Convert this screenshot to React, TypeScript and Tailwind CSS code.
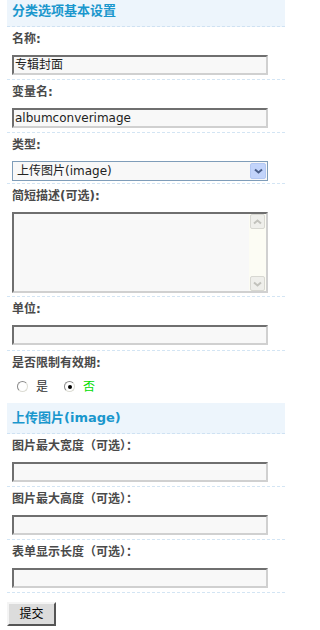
import type { ReactNode } from "react";

const font = "font-['DejaVu_Sans','Noto_Sans_CJK_SC',sans-serif]";

function SectionHeader({ title, className = "" }: { title: string; className?: string }) {
  return (
    <div
      className={`h-[31px] bg-[#edf5fc] border-b border-dashed border-[#cfe2f3] pl-[5px] flex items-center text-[13px] font-bold text-[#1a97cd] ${className}`}
    >
      {title}
    </div>
  );
}

function Field({ label, children, pb = "pb-[4px]", last = false }: { label: string; children: ReactNode; pb?: string; last?: boolean }) {
  return (
    <div className={`pl-[5px] pt-[4px] ${pb} ${last ? "" : "border-b border-dashed border-[#d3e5f4]"}`}>
      <div className="h-[16px] leading-[16px] font-bold text-[12px] text-[#4a4a4a] mb-[8px]">{label}</div>
      {children}
    </div>
  );
}

function TextInput({ value = "" }: { value?: string }) {
  return (
    <div className="w-[256px] h-[20px] bg-[#f8f8f8] border-2 border-t-[#6f6f6f] border-l-[#6f6f6f] border-r-[#d0d0d0] border-b-[#d0d0d0] pl-[1px] flex items-center text-[12px] text-[#222] leading-none">
      {value}
    </div>
  );
}

function Chevron({ up = false, color }: { up?: boolean; color: string }) {
  return (
    <svg width="9" height="6" viewBox="0 0 9 6" className={up ? "rotate-180" : ""}>
      <path d="M1 1.5 L4.5 4.5 L8 1.5" fill="none" stroke={color} strokeWidth="2" />
    </svg>
  );
}

function Radio({ checked = false }: { checked?: boolean }) {
  return (
    <div className="w-[11px] h-[11px] rounded-full bg-white border border-t-[#8a8a8a] border-l-[#8a8a8a] border-r-[#dcdcd4] border-b-[#dcdcd4] flex items-center justify-center">
      {checked && <div className="w-[4px] h-[4px] rounded-full bg-black" />}
    </div>
  );
}

export default function App() {
  return (
    <div className={`w-[285px] h-[630px] overflow-hidden bg-white pl-[7px] ${font}`}>
      <SectionHeader title="分类选项基本设置" className="-mt-[4px]" />

      <Field label="名称:">
        <TextInput value="专辑封面" />
      </Field>

      <Field label="变量名:">
        <TextInput value="albumconverimage" />
      </Field>

      <Field label="类型:" pb="pb-[2px]">
        <div className="w-[256px] h-[20px] bg-[#f8f8f8] border border-[#7f9db9] flex items-center justify-between pl-[4px] pr-[1px] text-[12px] text-[#222]">
          <span>上传图片(image)</span>
          <div className="w-[16px] h-[16px] rounded-[2px] bg-[#c2d4fb] border border-[#b3c8f3] flex items-center justify-center">
            <Chevron color="#4a5f8a" />
          </div>
        </div>
      </Field>

      <Field label="简短描述(可选):" pb="pb-[3px]">
        <div className="w-[256px] h-[81px] bg-[#f8f8f8] border-2 border-t-[#6f6f6f] border-l-[#6f6f6f] border-r-[#d0d0d0] border-b-[#d0d0d0] flex justify-end">
          <div className="w-[17px] h-full bg-[#fcfcf4] flex flex-col justify-between items-center">
            <div className="w-[15px] h-[15px] bg-[#efefeb] border border-[#d8d8d2] rounded-[2px] flex items-center justify-center">
              <Chevron up color="#c2c2bc" />
            </div>
            <div className="w-[15px] h-[15px] bg-[#efefeb] border border-[#d8d8d2] rounded-[2px] flex items-center justify-center">
              <Chevron color="#c2c2bc" />
            </div>
          </div>
        </div>
      </Field>

      <Field label="单位:" pb="pb-[5px]">
        <TextInput />
      </Field>

      <div className="pl-[5px] pt-[4px] pb-[8px]">
        <div className="h-[16px] leading-[16px] font-bold text-[12px] text-[#4a4a4a]">是否限制有效期:</div>
        <div className="mt-[7px] h-[17px] flex items-center text-[12px] pl-[5px]">
          <Radio />
          <span className="ml-[8px] text-[#333]">是</span>
          <div className="ml-[16px]">
            <Radio checked />
          </div>
          <span className="ml-[8px] text-[#00dd00]">否</span>
        </div>
      </div>

      <SectionHeader title="上传图片(image)" />

      <Field label="图片最大宽度（可选）：">
        <TextInput />
      </Field>

      <Field label="图片最大高度（可选）：">
        <TextInput />
      </Field>

      <Field label="表单显示长度（可选）：">
        <TextInput />
      </Field>

      <button className="mt-[9px] w-[49px] h-[24px] bg-[#dcdcdc] border-2 border-t-[#f4f4f4] border-l-[#f4f4f4] border-r-[#555] border-b-[#555] text-[12px] text-black flex items-center justify-center">
        提交
      </button>
    </div>
  );
}
